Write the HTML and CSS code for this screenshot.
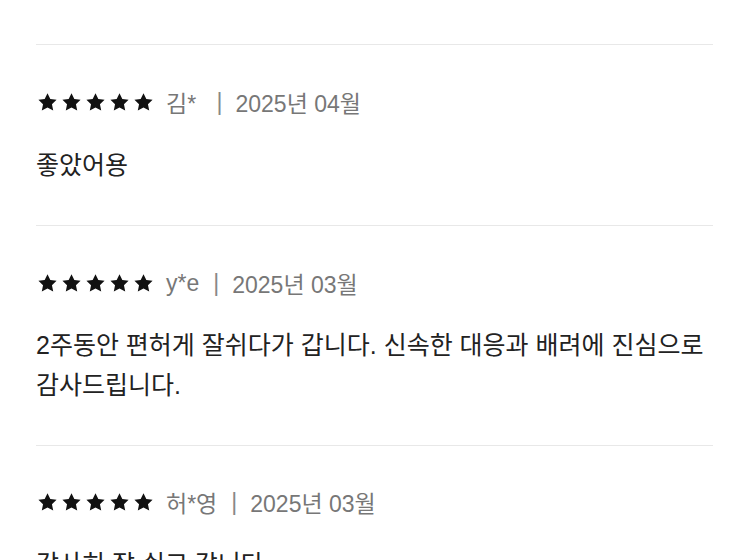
FILE: index.html
```html
<!DOCTYPE html>
<html lang="ko">
<head>
    <meta charset="UTF-8">
    <meta name="viewport" content="width=device-width, initial-scale=1.0">
    <title>후기</title>
    <link rel="stylesheet" href="styles.css">
</head>
<body>
    <svg width="0" height="0" class="defs">
        <defs>
            <symbol id="star" viewBox="0 0 24 23">
                <polygon points="12,0.3 15.6,7.6 23.6,8.6 17.7,14.3 19.3,22.4 12,18.4 4.7,22.4 6.3,14.3 0.4,8.6 8.4,7.6"/>
            </symbol>
        </defs>
    </svg>

    <div class="reviews">
        <div class="review">
            <div class="meta">
                <span class="stars">
                    <svg><use href="#star"/></svg><svg><use href="#star"/></svg><svg><use href="#star"/></svg><svg><use href="#star"/></svg><svg><use href="#star"/></svg>
                </span>
                <span class="name">김*&nbsp;</span>
                <span class="sep">|</span>
                <span class="date">2025년 04월</span>
            </div>
            <p class="text">좋았어용</p>
        </div>

        <div class="review">
            <div class="meta">
                <span class="stars">
                    <svg><use href="#star"/></svg><svg><use href="#star"/></svg><svg><use href="#star"/></svg><svg><use href="#star"/></svg><svg><use href="#star"/></svg>
                </span>
                <span class="name">y*e</span>
                <span class="sep">|</span>
                <span class="date">2025년 03월</span>
            </div>
            <p class="text">2주동안 편허게 잘쉬다가 갑니다. 신속한 대응과 배려에 진심으로 감사드립니다.</p>
        </div>

        <div class="review">
            <div class="meta">
                <span class="stars">
                    <svg><use href="#star"/></svg><svg><use href="#star"/></svg><svg><use href="#star"/></svg><svg><use href="#star"/></svg><svg><use href="#star"/></svg>
                </span>
                <span class="name">허*영</span>
                <span class="sep">|</span>
                <span class="date">2025년 03월</span>
            </div>
            <p class="text">감사히 잘 쉬고 갑니다</p>
        </div>
    </div>
</body>
</html>
```

FILE: styles.css
```css
body {
    margin: 0;
    background-color: #fff;
    font-family: "Liberation Sans", "Noto Sans CJK KR", sans-serif;
    color: #222;
}
.defs {
    position: absolute;
}
.reviews {
    padding: 44px 37px 0 36px;
}
.review {
    border-top: 1px solid #e8e8e8;
    padding: 42px 0 40px;
}
.review + .review + .review {
    padding-top: 41px;
}
.meta {
    display: flex;
    align-items: center;
    height: 30px;
    font-size: 23px;
    color: #777;
}
.stars {
    display: flex;
    gap: 5px;
    margin-left: 2px;
    margin-right: 13px;
}
.stars svg {
    width: 19px;
    height: 18px;
    fill: #111;
}
.sep {
    margin: 0 13px 0 14px;
    color: #888;
}
.text {
    margin: 28px 0 0;
    font-size: 25px;
    line-height: 40px;
    word-break: keep-all;
}
.review + .review .text {
    line-height: 39.5px;
}
```
